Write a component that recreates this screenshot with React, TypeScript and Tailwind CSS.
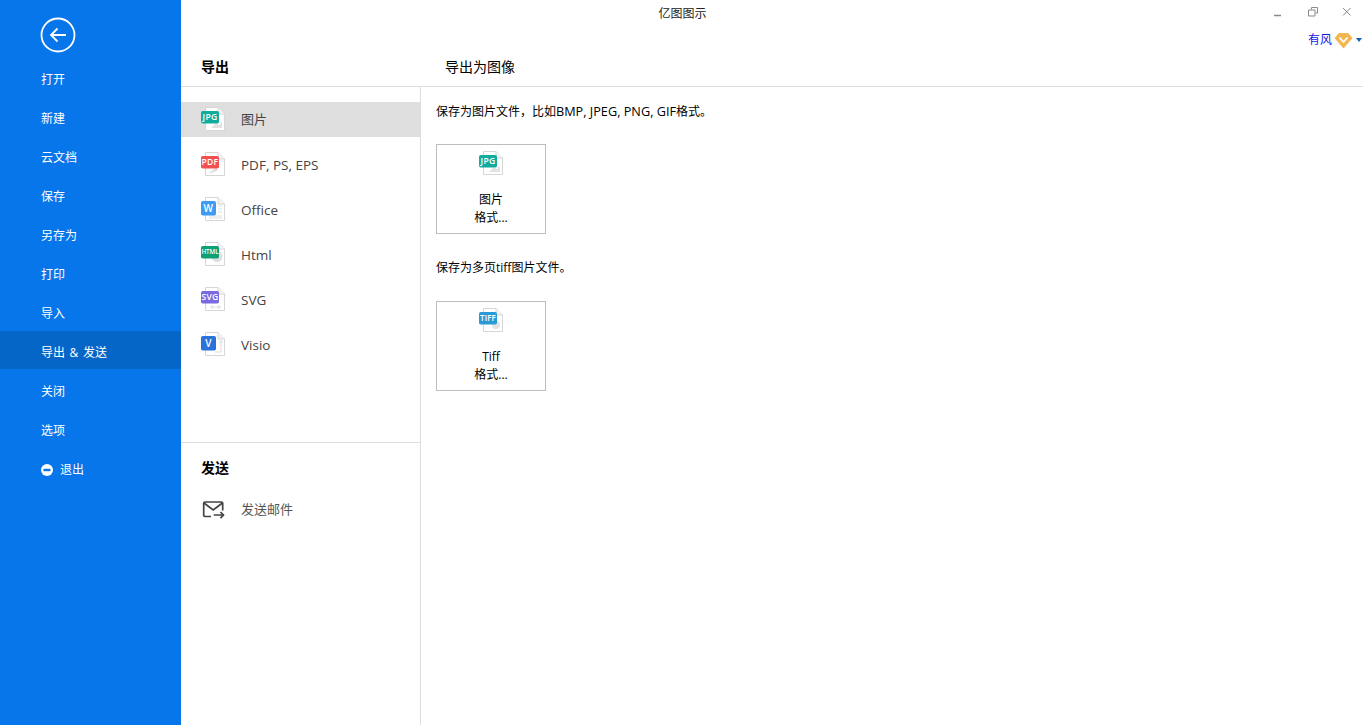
import React from "react";

const font = { fontFamily: '"Open Sans", "Noto Sans CJK SC", sans-serif' };

function FileIcon({
  label,
  color,
  size = 8.5,
  glyph,
  bw = 18,
  bh = 12.5,
  spacing = 0.3,
}: {
  label: string;
  color: string;
  size?: number;
  glyph: React.ReactNode;
  bw?: number;
  bh?: number;
  spacing?: number;
}) {
  return (
    <svg width="25" height="25" viewBox="0 0 25 25" className="shrink-0">
      <path d="M4.500.5H17L23.500 7V23.500H4.500Z" fill="#fff" stroke="#d6d6d6" />
      <path d="M17 .5V7H23.500" fill="#f3f3f3" stroke="#d6d6d6" />
      {glyph}
      <rect x="0" y="4" width={bw} height={bh} rx="1.800" fill={color} />
      <text
        x={bw / 2}
        y={4 + bh / 2 + size * 0.36}
        textAnchor="middle"
        fontSize={size}
        fontWeight="600"
        letterSpacing={spacing}
        fill="#fff"
        fontFamily="Open Sans, sans-serif"
      >
        {label}
      </text>
    </svg>
  );
}

const jpgGlyph = <path d="M10 21l5-5 3 2 3-3v6H10Z" fill="#e2e2e2" />;
const pdfGlyph = <path d="M7 21c3-1 6-4 8-5l2 2c-3 2-6 3-10 3Z" fill="#dcdcdc" />;
const wordGlyph = <path d="M17 9h4M17 12h4M17 15h4M8 19h13M8 21h13" stroke="#dedede" fill="none" />;
const htmlGlyph = <circle cx="16" cy="14.500" r="5.500" fill="#e0e0e0" />;
const svgGlyph = <path d="M9 20h11M11 18v4M18 18v4" stroke="#dcdcdc" fill="none" />;
const visioGlyph = <path d="M20 8v4M18 10h4M14 20h6v-8" stroke="#dcdcdc" fill="none" />;
const tiffGlyph = <circle cx="17" cy="17" r="4" fill="#e2e2e2" />;

const rows = [
  { name: "图片", cjk: true, active: true, icon: <FileIcon label="JPG" color="#12ac9c" glyph={jpgGlyph} /> },
  { name: "PDF, PS, EPS", icon: <FileIcon label="PDF" color="#f25050" glyph={pdfGlyph} /> },
  { name: "Office", icon: <FileIcon label="W" color="#3d9bf5" size={10} bw={15} bh={14.500} glyph={wordGlyph} /> },
  { name: "Html", icon: <FileIcon label="HTML" color="#0f9f77" size={6.200} spacing={0} glyph={htmlGlyph} /> },
  { name: "SVG", icon: <FileIcon label="SVG" color="#7b69e0" size={8.500} glyph={svgGlyph} /> },
  { name: "Visio", icon: <FileIcon label="V" color="#2a73da" size={10} bw={15} bh={14.500} glyph={visioGlyph} /> },
];

const nav = ["打开", "新建", "云文档", "保存", "另存为", "打印", "导入", "导出 & 发送", "关闭", "选项"];

function FormatCard({ icon, title }: { icon: React.ReactNode; title: string }) {
  return (
    <div className="w-[110px] h-[90px] border border-[#bdbdbd] flex flex-col items-center pt-[6px] text-[12px] leading-[18px] text-black">
      {icon}
      <div className="mt-[14px] pt-px">{title}</div>
      <div>格式...</div>
    </div>
  );
}

export default function App() {
  return (
    <div className="w-[1363px] h-[725px] flex overflow-hidden bg-white" style={font}>
      <aside className="w-[181px] shrink-0 bg-[#0776ea] text-white text-[12px]">
        <div className="h-[60px] pl-[40px] pt-[17px]">
          <svg width="36" height="36" viewBox="0 0 36 36">
            <circle cx="18" cy="18" r="16.500" fill="none" stroke="#fff" strokeWidth="1.800" />
            <path d="M26 18H11M17.500 11.500L11 18l6.500 6.500" fill="none" stroke="#fff" strokeWidth="1.800" />
          </svg>
        </div>
        {nav.map((n, i) => (
          <div
            key={n}
            className={
              i === 7
                ? "h-[38px] -mt-[2px] mb-[3px] pt-[6px] pl-[41px] flex items-center bg-[#0666c8] [word-spacing:1.5px]"
                : "h-[39px] pl-[41px] flex items-center"
            }
          >
            {n}
          </div>
        ))}
        <div className="h-[39px] pl-[41px] flex items-center gap-[7px]">
          <svg width="12" height="12" viewBox="0 0 12 12">
            <circle cx="6" cy="6" r="6" fill="#fff" />
            <rect x="2.500" y="4.800" width="7" height="2.400" fill="#0776ea" />
          </svg>
          退出
        </div>
      </aside>
      <div className="flex-1 flex flex-col min-w-0">
        <header className="h-[87px] shrink-0 border-b border-[#dedede] flex flex-col">
          <div className="h-[52px] flex items-start relative">
            <div className="w-full pr-[179px] text-center text-[12px] leading-[18px] pt-[5px] text-[#222]">亿图图示</div>
            <div className="absolute right-0 top-0 flex flex-col items-end">
              <div className="flex items-center h-[24px]">
                <svg width="10" height="10" viewBox="0 0 10 10" className="mr-[26px] mt-[2px]">
                  <path d="M2 7.500H9" stroke="#8a8a8a" strokeWidth="1.500" />
                </svg>
                <svg width="10" height="10" viewBox="0 0 10 10" className="mr-[24px]">
                  <path d="M3.500 2.500V.5H9.500V6H7.500M.5 3H7V9H.5Z" fill="none" stroke="#8a8a8a" />
                </svg>
                <svg width="10" height="10" viewBox="0 0 10 10" className="mr-[11px] -mt-[1px]">
                  <path d="M1 1L8.500 8.500M8.500 1L1 8.500" fill="none" stroke="#8a8a8a" />
                </svg>
              </div>
              <div className="flex items-center h-[22px] mt-[5px] text-[12px] text-[#1515e8]">
                有风
                <svg width="20" height="17" viewBox="0 0 20 17" className="ml-[2px]">
                  <path d="M5 1H14L18.500 6 9.500 16.500.5 6Z" fill="#f3b54d" />
                  <path d="M5.500 5.500L9.500 10l4-4.500" fill="none" stroke="#fff" strokeWidth="1.800" />
                </svg>
                <svg width="6" height="4" viewBox="0 0 6 4" className="ml-[2px] mr-[1px]">
                  <path d="M0 0H6L3 4Z" fill="#1465b4" />
                </svg>
              </div>
            </div>
          </div>
          <div className="flex-1 flex items-center pb-[5px] text-[14px] text-black">
            <div className="w-[239px] pl-[20px] font-bold">导出</div>
            <div className="pl-[25px]">导出为图像</div>
          </div>
        </header>
        <div className="flex-1 flex min-h-0">
          <div className="w-[240px] shrink-0 border-r border-[#dedede] flex flex-col">
            <div className="pt-[15px] flex flex-col gap-[10px] h-[356px] border-b border-[#dedede]">
              {rows.map((r) => (
                <div
                  key={r.name}
                  className={`h-[35px] pl-[20px] flex items-center gap-[15px] text-[#444] ${r.active ? "bg-[#dedede]" : ""}`}
                >
                  {r.icon}
                  {r.cjk ? (
                    <span className="text-[13px]">{r.name}</span>
                  ) : (
                    <span className="relative top-px text-[13.5px]">{r.name}</span>
                  )}
                </div>
              ))}
            </div>
            <div className="pl-[20px] pt-[16px] text-[14px] leading-[18px] font-bold text-black">发送</div>
            <div className="pl-[20px] mt-[23px] flex items-center gap-[15px] text-[13px] text-[#555]">
              <svg width="25" height="20" viewBox="0 0 25 20" className="shrink-0">
                <path d="M10 16.500H4A1.300 1.300 0 0 1 2.700 15.200V3.300A1.300 1.300 0 0 1 4 2H20.400A1.300 1.300 0 0 1 21.700 3.300V10.500" fill="none" stroke="#444" strokeWidth="1.700" />
                <path d="M3 3L12.200 10L21.400 3" fill="none" stroke="#444" strokeWidth="1.700" />
                <path d="M12.700 15H22M19.500 12L22.500 15L19.500 18.200" fill="none" stroke="#444" strokeWidth="1.700" />
              </svg>
              发送邮件
            </div>
          </div>
          <main className="flex-1 pl-[15px] text-[12px] text-black">
            <div className="h-[18px] mt-[15px] leading-[18px]">
              保存为图片文件，比如<span className="text-[12.7px]">BMP, JPEG, PNG, GIF</span>格式。
            </div>
            <div className="mt-[24px]">
              <FormatCard icon={<FileIcon label="JPG" color="#12ac9c" glyph={jpgGlyph} />} title="图片" />
            </div>
            <div className="h-[18px] mt-[25px] leading-[18px]">保存为多页tiff图片文件。</div>
            <div className="mt-[24px]">
              <FormatCard icon={<FileIcon label="TIFF" color="#2a9ad6" size={8} spacing={0.1} glyph={tiffGlyph} />} title="Tiff" />
            </div>
          </main>
        </div>
      </div>
    </div>
  );
}
